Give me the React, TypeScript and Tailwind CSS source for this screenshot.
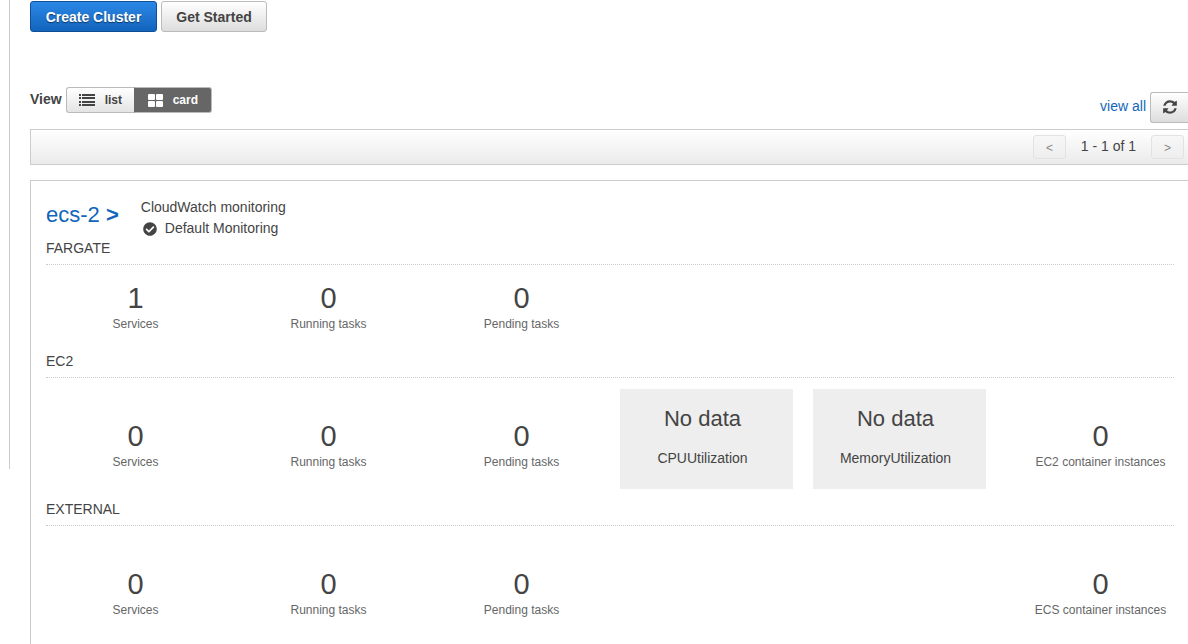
import { ReactNode } from "react";
import { FaCheckCircle } from "react-icons/fa";

function ListIcon() {
  return (
    <svg viewBox="0 0 16 12" className="h-3 w-4" fill="currentColor" aria-hidden="true">
      <path d="M0 0h2v2H0zM3 0h13v2H3zM0 3h2v2H0zM3 3h13v2H3zM0 7h2v2H0zM3 7h13v2H3zM0 10h2v2H0zM3 10h13v2H3z" />
    </svg>
  );
}

function CardIcon() {
  return (
    <svg viewBox="0 0 15 13" className="h-[13px] w-[15px]" fill="currentColor" aria-hidden="true">
      <rect x="0" y="0" width="7" height="6" rx="1" />
      <rect x="8" y="0" width="7" height="6" rx="1" />
      <rect x="0" y="7" width="7" height="6" rx="1" />
      <rect x="8" y="7" width="7" height="6" rx="1" />
    </svg>
  );
}

function RefreshIcon() {
  return (
    <svg viewBox="0 0 1792 1792" className="size-4" fill="currentColor" aria-hidden="true">
      <path d="M1639 1056q0 5-1 7-64 268-268 434.5t-478 166.5q-146 0-282.5-55t-243.5-157l-129 129q-19 19-45 19t-45-19-19-45v-448q0-26 19-45t45-19h448q26 0 45 19t19 45-19 45l-137 137q71 66 161 102t187 36q134 0 250-65t186-179q11-17 53-117 8-23 30-23h192q13 0 22.5 9.5t9.5 22.5zm25-800v448q0 26-19 45t-45 19h-448q-26 0-45-19t-19-45 19-45l138-138q-148-137-349-137-134 0-250 65t-186 179q-11 17-53 117-8 23-30 23h-199q-13 0-22.5-9.5t-9.5-22.5v-7q65-268 270-434.5t480-166.5q146 0 284 55.5t245 156.5l130-129q19-19 45-19t45 19 19 45z" />
    </svg>
  );
}

function Stat({ value, label }: { value: number; label: string }) {
  return (
    <div className="flex flex-col items-center pl-4 text-center">
      <span className="text-[29px] leading-8">{value}</span>
      <span className="text-xs leading-5 whitespace-nowrap text-[#666]">{label}</span>
    </div>
  );
}

function Metric({ label }: { label: string }) {
  return (
    <div className="flex h-[100px] flex-col items-center gap-[11px] bg-[#eee] pt-4 pr-2 text-center">
      <span className="text-[22px] leading-7">No data</span>
      <span className="text-sm leading-7">{label}</span>
    </div>
  );
}

function SectionTitle({ children }: { children: ReactNode }) {
  return (
    <h2 className="h-[27px] border-b border-dotted border-[#ccc] text-sm leading-5">{children}</h2>
  );
}

function TaskStats({ services }: { services: number }) {
  return (
    <>
      <Stat value={services} label="Services" />
      <Stat value={0} label="Running tasks" />
      <Stat value={0} label="Pending tasks" />
    </>
  );
}

const pagerButton =
  "h-6 w-[33px] rounded-[3px] border border-[#e2e2e2] bg-linear-to-b from-[#f7f7f7] to-[#eee] pt-0.5 text-xs leading-4 text-[#888]";

export default function App() {
  return (
    <div className="flex min-h-screen overflow-x-hidden bg-white font-['Liberation_Sans',Arial,sans-serif] text-[#444]">
      <aside className="h-[469px] w-[10px] shrink-0 border-r border-[#ccc]" />
      <main className="flex min-w-0 flex-1 flex-col pl-5">
        <div className="flex gap-1 pt-px">
          <button className="h-[31px] w-[127px] rounded-[3px] border border-[#0f4f95] bg-linear-to-b from-[#2b88e6] to-[#1264bd] text-sm font-bold text-white text-shadow-[0_1px_1px_rgba(0,0,0,0.5)]">
            Create Cluster
          </button>
          <button className="h-[31px] w-[106px] rounded-[3px] border border-[#bbb] bg-linear-to-b from-white to-[#ddd] text-sm font-bold">
            Get Started
          </button>
        </div>

        <div className="flex items-start justify-between pt-[55px]">
          <div className="flex gap-1">
            <span className="text-sm leading-6 font-bold">View</span>
            <div className="flex h-[26px] text-xs font-bold">
              <button className="flex w-[68px] items-center gap-2.5 rounded-l-[3px] border border-r-0 border-[#bbb] bg-linear-to-b from-white to-[#e4e4e4] pl-3">
                <ListIcon />
                list
              </button>
              <button
                aria-pressed="true"
                className="flex w-[78px] items-center gap-2.5 rounded-r-[3px] border border-[#bbb] border-l-[#666] bg-[#666] pl-[13px] text-white"
              >
                <CardIcon />
                card
              </button>
            </div>
          </div>
          <div className="flex items-center gap-1 pt-[5px]">
            <a href="#all" className="pb-1 text-sm text-[#1166bb]">
              view all
            </a>
            <button
              aria-label="Refresh"
              className="flex h-[31px] w-[38px] items-center justify-center rounded-l-[3px] border border-r-0 border-[#bbb] bg-linear-to-b from-white to-[#ddd] pb-0.5"
            >
              <RefreshIcon />
            </button>
          </div>
        </div>

        <div className="mt-1.5 flex h-9 items-center justify-end border border-r-0 border-[#ccc] bg-linear-to-b from-white to-[#ebebeb] pr-1">
          <button aria-label="Previous page" className={pagerButton}>
            &lt;
          </button>
          <span className="w-[85px] pb-0.5 text-center text-sm">1 - 1 of 1</span>
          <button aria-label="Next page" className={pagerButton}>
            &gt;
          </button>
        </div>

        <section className="mt-[15px] flex-1 border-t border-l border-[#ccc] pt-4 pr-3.5 pl-[15px]">
          <div className="flex h-[41px] gap-[22px]">
            <a href="#ecs-2" className="pt-1 text-[22px] leading-7 text-[#1166bb]">
              ecs-2 <b>&gt;</b>
            </a>
            <div className="text-sm leading-[21px]">
              <p>CloudWatch monitoring</p>
              <p className="flex items-center gap-2 pl-0.5">
                <FaCheckCircle className="size-3.5" />
                Default Monitoring
              </p>
            </div>
          </div>

          <SectionTitle>FARGATE</SectionTitle>
          <div className="-mx-[5px] grid h-[86px] grid-cols-6 gap-5 pt-[17px]">
            <TaskStats services={1} />
          </div>

          <SectionTitle>EC2</SectionTitle>
          <div className="-mx-[5px] grid h-[121px] grid-cols-6 items-end gap-5 pb-2.5">
            <div className="col-span-3 grid grid-cols-3 gap-5 pb-[17px]">
              <TaskStats services={0} />
            </div>
            <Metric label="CPUUtilization" />
            <Metric label="MemoryUtilization" />
            <div className="pb-[17px]">
              <Stat value={0} label="EC2 container instances" />
            </div>
          </div>

          <SectionTitle>EXTERNAL</SectionTitle>
          <div className="-mx-[5px] grid h-[121px] grid-cols-6 items-end gap-5 pb-[27px]">
            <TaskStats services={0} />
            <div className="col-span-2" />
            <Stat value={0} label="ECS container instances" />
          </div>
        </section>
      </main>
    </div>
  );
}
